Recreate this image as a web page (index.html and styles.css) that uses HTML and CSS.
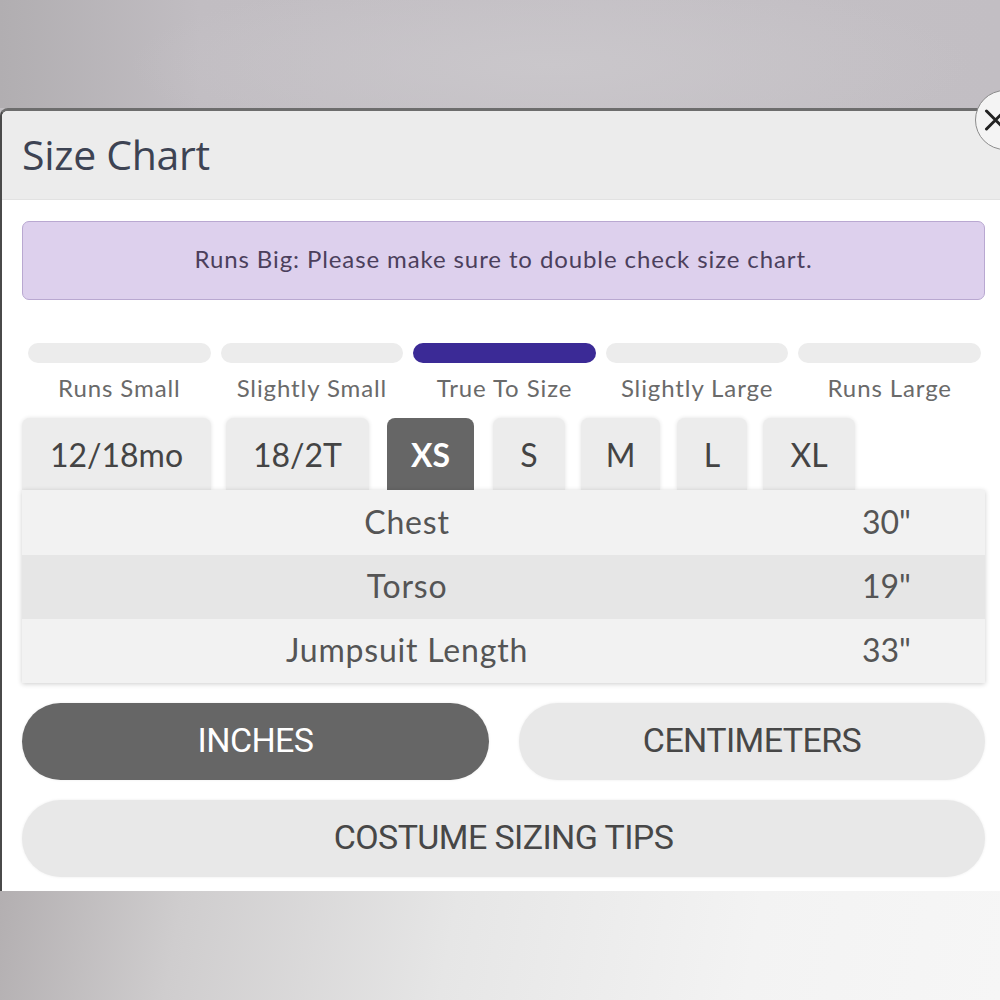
FILE: index.html
```html
<!DOCTYPE html>
<html lang="en">
<head>
<meta charset="utf-8">
<title>Size Chart</title>
<link rel="stylesheet" href="styles.css">
</head>
<body>
<div class="screen">
  <div class="backdrop-top"></div>
  <div class="modal">
    <button class="close" aria-label="Close">
      <svg viewBox="0 0 40 40" width="40" height="40"><path d="M6 8 L30 32 M30 8 L6 32" stroke="#222" stroke-width="4" stroke-linecap="round" fill="none"/></svg>
    </button>
    <header class="modal-header">
      <h1 class="title">Size Chart</h1>
    </header>
    <div class="modal-body">
      <div class="alert">Runs Big: Please make sure to double check size chart.</div>

      <div class="fit">
        <div class="fit-item"><span class="fit-bar"></span><span class="fit-label">Runs Small</span></div>
        <div class="fit-item"><span class="fit-bar"></span><span class="fit-label">Slightly Small</span></div>
        <div class="fit-item"><span class="fit-bar fit-bar-active"></span><span class="fit-label">True To Size</span></div>
        <div class="fit-item"><span class="fit-bar"></span><span class="fit-label">Slightly Large</span></div>
        <div class="fit-item"><span class="fit-bar"></span><span class="fit-label">Runs Large</span></div>
      </div>

      <div class="tabs">
        <button class="tab tab-w1">12/18mo</button>
        <button class="tab tab-w2">18/2T</button>
        <button class="tab tab-w3 tab-active">XS</button>
        <button class="tab tab-w4">S</button>
        <button class="tab tab-w5">M</button>
        <button class="tab tab-w6">L</button>
        <button class="tab tab-w7">XL</button>
      </div>

      <table class="chart">
        <tr class="row-light"><td class="label">Chest</td><td class="value">30"</td></tr>
        <tr class="row-dark"><td class="label">Torso</td><td class="value">19"</td></tr>
        <tr class="row-light"><td class="label">Jumpsuit Length</td><td class="value">33"</td></tr>
      </table>

      <div class="units">
        <button class="pill pill-active">INCHES</button>
        <button class="pill">CENTIMETERS</button>
      </div>
      <button class="pill pill-wide">COSTUME SIZING TIPS</button>
    </div>
  </div>
  <div class="backdrop-bottom"></div>
</div>
</body>
</html>
```
FILE: styles.css
```css
* { box-sizing: border-box; }
html, body { margin: 0; padding: 0; }
body {
  width: 1000px;
  height: 1000px;
  overflow: hidden;
  font-family: Lato, "Open Sans", sans-serif;
  background: #c2bfc3;
}
.screen {
  width: 1000px;
  height: 1000px;
  overflow: hidden;
  display: flex;
  flex-direction: column;
}
.backdrop-top {
  height: 108px;
  flex: none;
  background:
    radial-gradient(ellipse 60% 120% at 55% 60%, #cac7cb 0%, rgba(202,199,203,0) 70%),
    linear-gradient(90deg, #b1aeb1 0%, #c1bdc2 20%, #c4c0c5 60%, #c2bec3 100%);
}
.backdrop-bottom {
  flex: 1;
  background: linear-gradient(100deg, #b3afb1 0%, #cfcdce 18%, #e6e6e6 45%, #f3f3f3 75%, #f6f6f6 100%);
}
.modal {
  position: relative;
  flex: none;
  width: 1010px;
  background: #fff;
  border-left: 2px solid #4a4a4a;
  border-top: 3px solid #6d6d6d;
  border-top-left-radius: 8px;
}
.close {
  position: absolute;
  right: -25px;
  top: -21px;
  width: 60px;
  height: 60px;
  border-radius: 50%;
  background: #f4f4f4;
  border: 1px solid #8c8c8c;
  padding: 0 0 0 6px;
  display: flex;
  align-items: center;
  justify-content: flex-start;
  z-index: 2;
}
.close svg { width: 30px; height: 30px; }
.modal-header {
  background: #ececec;
  height: 89px;
  padding: 0 20px;
  display: flex;
  align-items: center;
  border-bottom: 1px solid #e2e2e2;
  border-top-left-radius: 6px;
}
.title {
  margin: 0;
  font-family: "Open Sans", Lato, sans-serif;
  font-weight: 400;
  font-size: 41px;
  letter-spacing: -0.3px;
  color: #3d4353;
  padding-bottom: 2px;
}
.modal-body {
  padding: 21px 23px 14px 20px;
  display: flex;
  flex-direction: column;
}
.alert {
  height: 79px;
  margin-right: 2px;
  background: #ddd0ed;
  border: 1px solid #b9a8d1;
  border-radius: 7px;
  display: flex;
  align-items: center;
  justify-content: center;
  font-size: 24px;
  color: #4b3f5c;
  letter-spacing: 0.9px;
  padding-bottom: 4px;
}
.fit {
  margin-top: 43px;
  padding: 0 6px;
  display: grid;
  grid-template-columns: repeat(5, 1fr);
  column-gap: 10px;
}
.fit-item {
  display: flex;
  flex-direction: column;
  align-items: center;
}
.fit-bar {
  display: block;
  width: 100%;
  height: 20px;
  border-radius: 10px;
  background: #ececec;
}
.fit-bar-active { background: #3b2a96; }
.fit-label {
  margin-top: 10px;
  font-size: 24px;
  letter-spacing: 0.9px;
  color: #6a6a6a;
  white-space: nowrap;
}
.tabs {
  margin-top: 16px;
  display: flex;
  gap: 16px;
  height: 72px;
  align-items: flex-end;
}
.tab {
  height: 72px;
  border: none;
  border-radius: 8px 8px 0 0;
  background: #ececec;
  box-shadow: 0 0 4px rgba(0,0,0,0.12);
  font-family: Lato, sans-serif;
  font-size: 32px;
  color: #444;
  padding: 0;
  display: flex;
  align-items: center;
  justify-content: center;
}
.tab-w1 { width: 189px; }
.tab-w2 { width: 143px; margin-left: -1px; }
.tab-w3 { width: 87px; margin-left: 2px; }
.tab-w4 { width: 72px; margin-left: 3px; }
.tab-w5 { width: 79px; }
.tab-w6 { width: 70px; margin-left: 1px; }
.tab-w7 { width: 92px; }
.tab-active {
  background: #666;
  color: #fff;
  font-weight: 700;
  box-shadow: none;
}
.chart {
  width: 963px;
  border-collapse: collapse;
  box-shadow: 0 1px 5px rgba(0,0,0,0.2);
  position: relative;
}
.chart td {
  height: 64px;
  padding: 0 0 3px 0;
  font-size: 32px;
  letter-spacing: 0.8px;
  color: #555;
  text-align: center;
}
.chart .label { width: 770px; }
.chart .value { width: 193px; padding-right: 4px; letter-spacing: 0; }
.row-light td { background: #f2f2f2; }
.row-dark td { background: #e6e6e6; }
.row-light:first-child td { height: 65px; }
.units {
  margin-top: 20px;
  display: grid;
  grid-template-columns: 467px 466px;
  column-gap: 30px;
}
.pill {
  height: 77px;
  border: none;
  border-radius: 39px;
  background: #e8e8e8;
  font-family: Roboto, sans-serif;
  font-size: 34px;
  letter-spacing: -0.6px;
  color: #474747;
  padding: 0 0 4px 0;
  box-shadow: 0 0 3px rgba(0,0,0,0.08);
}
.pill-active {
  background: #666;
  color: #fff;
}
.pill-wide {
  margin-top: 20px;
  width: 963px;
}
```
